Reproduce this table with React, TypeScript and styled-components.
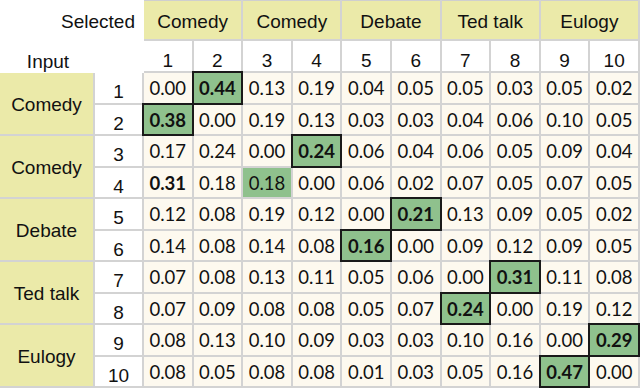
import React from "react";
import styled, { createGlobalStyle } from "styled-components";

const GlobalStyle = createGlobalStyle`
  html, body { margin: 0; padding: 0; background: #ffffff; }
  * { box-sizing: border-box; }
`;

const Table = styled.div`
  width: 640px;
  height: 388px;
  display: grid;
  grid-template-columns: 93px 47px repeat(10, minmax(0, 1fr));
  grid-template-rows: 39px 30px repeat(10, minmax(0, 1fr));
  gap: 2px;
  padding: 0 2px 2px 0;
  background: #d3d3d3;
  font-family: "Liberation Sans", Arial, Helvetica, sans-serif;
  color: #111111;
  line-height: 1;
  overflow: hidden;
`;

const Corner = styled.div`
  grid-column: 1 / 3;
  grid-row: 1 / 3;
  margin: 0 -2px -2px 0;
  background: #ffffff;
  display: grid;
  grid-template-columns: 93px 1fr;
  grid-template-rows: 41px 1fr;
  font-size: 19px;
`;

const SelectedLabel = styled.div`
  grid-column: 1 / 3;
  display: flex;
  align-items: center;
  justify-content: flex-end;
  padding: 2px 9px 0 0;
`;

const InputLabel = styled.div`
  display: flex;
  align-items: center;
  justify-content: center;
  padding: 8px 0 0 3px;
`;

const GroupHeader = styled.div`
  grid-column: span 2;
  background: #ebeaa9;
  box-shadow: inset 0 1px 0 #cfcfcf;
  display: flex;
  align-items: center;
  justify-content: center;
  font-size: 19px;
  padding-top: 3px;
`;

const ColIndex = styled.div`
  background: #ffffff;
  display: flex;
  align-items: center;
  justify-content: center;
  font-size: 19px;
  padding-top: 8px;
`;

const RowGroup = styled.div`
  grid-row: span 2;
  background: #ebeaa9;
  display: flex;
  align-items: center;
  justify-content: center;
  font-size: 19px;
  padding-top: 2px;
`;

const RowIndex = styled.div`
  background: #ffffff;
  display: flex;
  align-items: center;
  justify-content: center;
  font-size: 19px;
  padding-top: 8px;
`;

const Cell = styled.div<{ $bold?: boolean; $fill?: boolean; $boxed?: boolean }>`
  background: ${(p) => (p.$fill ? "#8fc18d" : "#fdf9ef")};
  display: flex;
  align-items: center;
  justify-content: center;
  font-family: Lato, "Open Sans", sans-serif;
  font-size: 18.5px;
  font-weight: ${(p) => (p.$bold ? 700 : 400)};
  padding-top: 1px;
  outline: ${(p) => (p.$boxed ? "2px solid #1a1a1a" : "none")};
`;

const groups = ["Comedy", "Comedy", "Debate", "Ted talk", "Eulogy"];

const data: string[][] = [
  ["0.00", "0.44", "0.13", "0.19", "0.04", "0.05", "0.05", "0.03", "0.05", "0.02"],
  ["0.38", "0.00", "0.19", "0.13", "0.03", "0.03", "0.04", "0.06", "0.10", "0.05"],
  ["0.17", "0.24", "0.00", "0.24", "0.06", "0.04", "0.06", "0.05", "0.09", "0.04"],
  ["0.31", "0.18", "0.18", "0.00", "0.06", "0.02", "0.07", "0.05", "0.07", "0.05"],
  ["0.12", "0.08", "0.19", "0.12", "0.00", "0.21", "0.13", "0.09", "0.05", "0.02"],
  ["0.14", "0.08", "0.14", "0.08", "0.16", "0.00", "0.09", "0.12", "0.09", "0.05"],
  ["0.07", "0.08", "0.13", "0.11", "0.05", "0.06", "0.00", "0.31", "0.11", "0.08"],
  ["0.07", "0.09", "0.08", "0.08", "0.05", "0.07", "0.24", "0.00", "0.19", "0.12"],
  ["0.08", "0.13", "0.10", "0.09", "0.03", "0.03", "0.10", "0.16", "0.00", "0.29"],
  ["0.08", "0.05", "0.08", "0.08", "0.01", "0.03", "0.05", "0.16", "0.47", "0.00"],
];

// [row, col] zero-based
const boxed = new Set(["0-1", "1-0", "2-3", "4-5", "5-4", "6-7", "7-6", "8-9", "9-8"]);
const boldOnly = new Set(["3-0"]);
const fillOnly = new Set(["3-2"]);

export default function App() {
  return (
    <>
      <GlobalStyle />
      <Table>
        <Corner>
          <SelectedLabel>Selected</SelectedLabel>
          <InputLabel>Input</InputLabel>
        </Corner>
        {groups.map((g, i) => (
          <GroupHeader key={"g" + i}>{g}</GroupHeader>
        ))}
        {data.map((_, i) => (
          <ColIndex key={"c" + i}>{i + 1}</ColIndex>
        ))}
        {data.map((row, r) => (
          <React.Fragment key={"r" + r}>
            {r % 2 === 0 && <RowGroup>{groups[r / 2]}</RowGroup>}
            <RowIndex>{r + 1}</RowIndex>
            {row.map((v, c) => {
              const k = `${r}-${c}`;
              const isBoxed = boxed.has(k);
              return (
                <Cell
                  key={k}
                  $boxed={isBoxed}
                  $fill={isBoxed || fillOnly.has(k)}
                  $bold={isBoxed || boldOnly.has(k)}
                >
                  {v}
                </Cell>
              );
            })}
          </React.Fragment>
        ))}
      </Table>
    </>
  );
}
